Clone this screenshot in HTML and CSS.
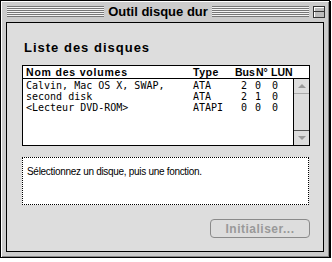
FILE: index.html
```html
<!DOCTYPE html>
<html lang="fr">
<head>
    <meta charset="UTF-8">
    <title>Outil disque dur</title>
    <link rel="stylesheet" href="styles.css">
</head>
<body>
    <div class="window">
        <div class="titlebar">
            <div class="stripes"></div>
            <div class="title">Outil disque dur</div>
            <div class="stripes"></div>
            <div class="zoombox"><span></span></div>
        </div>
        <div class="content">
            <div class="heading">Liste des disques</div>
            <div class="list">
                <div class="list-head">
                    <span class="col-name">Nom des volumes</span>
                    <span class="col-type">Type</span>
                    <span class="col-bus">Bus</span>
                    <span class="col-id">N°</span>
                    <span class="col-lun">LUN</span>
                </div>
                <div class="list-body">
                    <div class="rows">
                        <div class="row">
                            <span class="col-name">Calvin, Mac OS X, SWAP,</span>
                            <span class="col-type">ATA</span>
                            <span class="col-bus">2</span>
                            <span class="col-id">0</span>
                            <span class="col-lun">0</span>
                        </div>
                        <div class="row">
                            <span class="col-name">second disk</span>
                            <span class="col-type">ATA</span>
                            <span class="col-bus">2</span>
                            <span class="col-id">1</span>
                            <span class="col-lun">0</span>
                        </div>
                        <div class="row">
                            <span class="col-name">&lt;Lecteur DVD-ROM&gt;</span>
                            <span class="col-type">ATAPI</span>
                            <span class="col-bus">0</span>
                            <span class="col-id">0</span>
                            <span class="col-lun">0</span>
                        </div>
                    </div>
                    <div class="scrollbar">
                        <div class="arrow up"></div>
                        <div class="track"></div>
                        <div class="arrow down"></div>
                    </div>
                </div>
            </div>
            <div class="message">Sélectionnez un disque, puis une fonction.</div>
            <div class="actions">
                <button class="btn" disabled>Initialiser...</button>
            </div>
        </div>
    </div>
</body>
</html>
```

FILE: styles.css
```css
/* General */
body {
    margin: 0;
    background: #fff;
    font-family: 'Liberation Sans', Arial, sans-serif;
}

.window {
    box-sizing: border-box;
    width: 330px;
    height: 258px;
    border: 1px solid #000;
    background: #cccccc;
    box-shadow: 1px 1px 0 #000, inset 1px 1px 0 #fff, inset -1px -1px 0 #888;
    display: flex;
    flex-direction: column;
}

/* Title bar */
.titlebar {
    height: 21px;
    display: flex;
    align-items: center;
    padding: 0 4px 0 6px;
}

.stripes {
    flex: 1;
    height: 11px;
    background: repeating-linear-gradient(to bottom, #777 0, #777 1px, #f4f4f4 1px, #f4f4f4 2px);
}

.title {
    margin: 0 4px;
    font-size: 13px;
    font-weight: bold;
    line-height: 16px;
    color: #000;
}

.zoombox {
    box-sizing: border-box;
    width: 12px;
    height: 12px;
    margin-left: 4px;
    border: 1px solid #333;
    background: #bbb;
    box-shadow: inset 1px 1px 0 #fff;
    display: flex;
    align-items: center;
}

.zoombox span {
    display: block;
    width: 100%;
    height: 1px;
    background: #333;
}

/* Content area */
.content {
    flex: 1;
    margin: 0 5px 5px 5px;
    border: 1px solid #000;
    background: #dddddd;
    padding: 17px 14px 0 15px;
}

.heading {
    padding-left: 2px;
    font-size: 13px;
    font-weight: bold;
    letter-spacing: 1px;
    line-height: 16px;
    color: #000;
}

/* Volume list */
.list {
    margin-top: 9px;
    width: 288px;
    height: 81px;
    box-sizing: border-box;
    border: 1px solid #000;
    background: #fff;
    display: flex;
    flex-direction: column;
}

.list-head {
    height: 12px;
    border-bottom: 1px solid #000;
    display: flex;
    font-size: 10.5px;
    font-weight: bold;
    line-height: 12px;
    white-space: nowrap;
}

.list-head .col-name { letter-spacing: 0.8px; }
.list-head .col-type { letter-spacing: 0.5px; }
.list-head .col-bus { width: 21px; }
.list-head .col-id { width: 15px; }
.list-head .col-lun { width: 22px; }

.list-body {
    flex: 1;
    display: flex;
}

.rows {
    flex: 1;
    padding-top: 1px;
}

.row {
    display: flex;
    height: 11px;
    font-family: 'DejaVu Sans Mono', monospace;
    font-size: 10px;
    line-height: 11px;
    white-space: nowrap;
}

.col-name { width: 167px; padding-left: 3px; }
.col-type { width: 42px; }
.col-bus { width: 20px; }
.col-id { width: 15px; }
.col-lun { width: 23px; }

.row .col-bus { width: 14px; padding-left: 6px; }
.row .col-lun { width: 21px; padding-left: 2px; }

.scrollbar {
    width: 15px;
    border-left: 1px solid #000;
    background: #dddddd;
    display: flex;
    flex-direction: column;
}

.arrow {
    height: 14px;
    display: flex;
    align-items: center;
    justify-content: center;
}

.arrow.up { border-bottom: 1px solid #aaa; }
.arrow.down { border-top: 1px solid #555; }

.arrow::before {
    content: '';
    border-left: 4px solid transparent;
    border-right: 4px solid transparent;
}

.arrow.up::before { border-bottom: 4px solid #999; }
.arrow.down::before { border-top: 4px solid #999; }

.track {
    flex: 1;
}

/* Message box */
.message {
    margin-top: 11px;
    width: 287px;
    height: 48px;
    box-sizing: border-box;
    border: 1px dotted #000;
    background: #fff;
    padding: 8px 4px 0 4px;
    font-size: 10px;
    letter-spacing: -0.3px;
    line-height: 12px;
    color: #000;
}

/* Button */
.actions {
    margin-top: 14px;
    width: 288px;
    display: flex;
    justify-content: flex-end;
}

.btn {
    width: 100px;
    height: 19px;
    padding: 0;
    border: 1px solid #8a8a8a;
    border-radius: 4px;
    background: #dddddd;
    font-family: 'Liberation Sans', Arial, sans-serif;
    font-size: 12px;
    font-weight: bold;
    letter-spacing: 0.5px;
    color: #999;
}
```
